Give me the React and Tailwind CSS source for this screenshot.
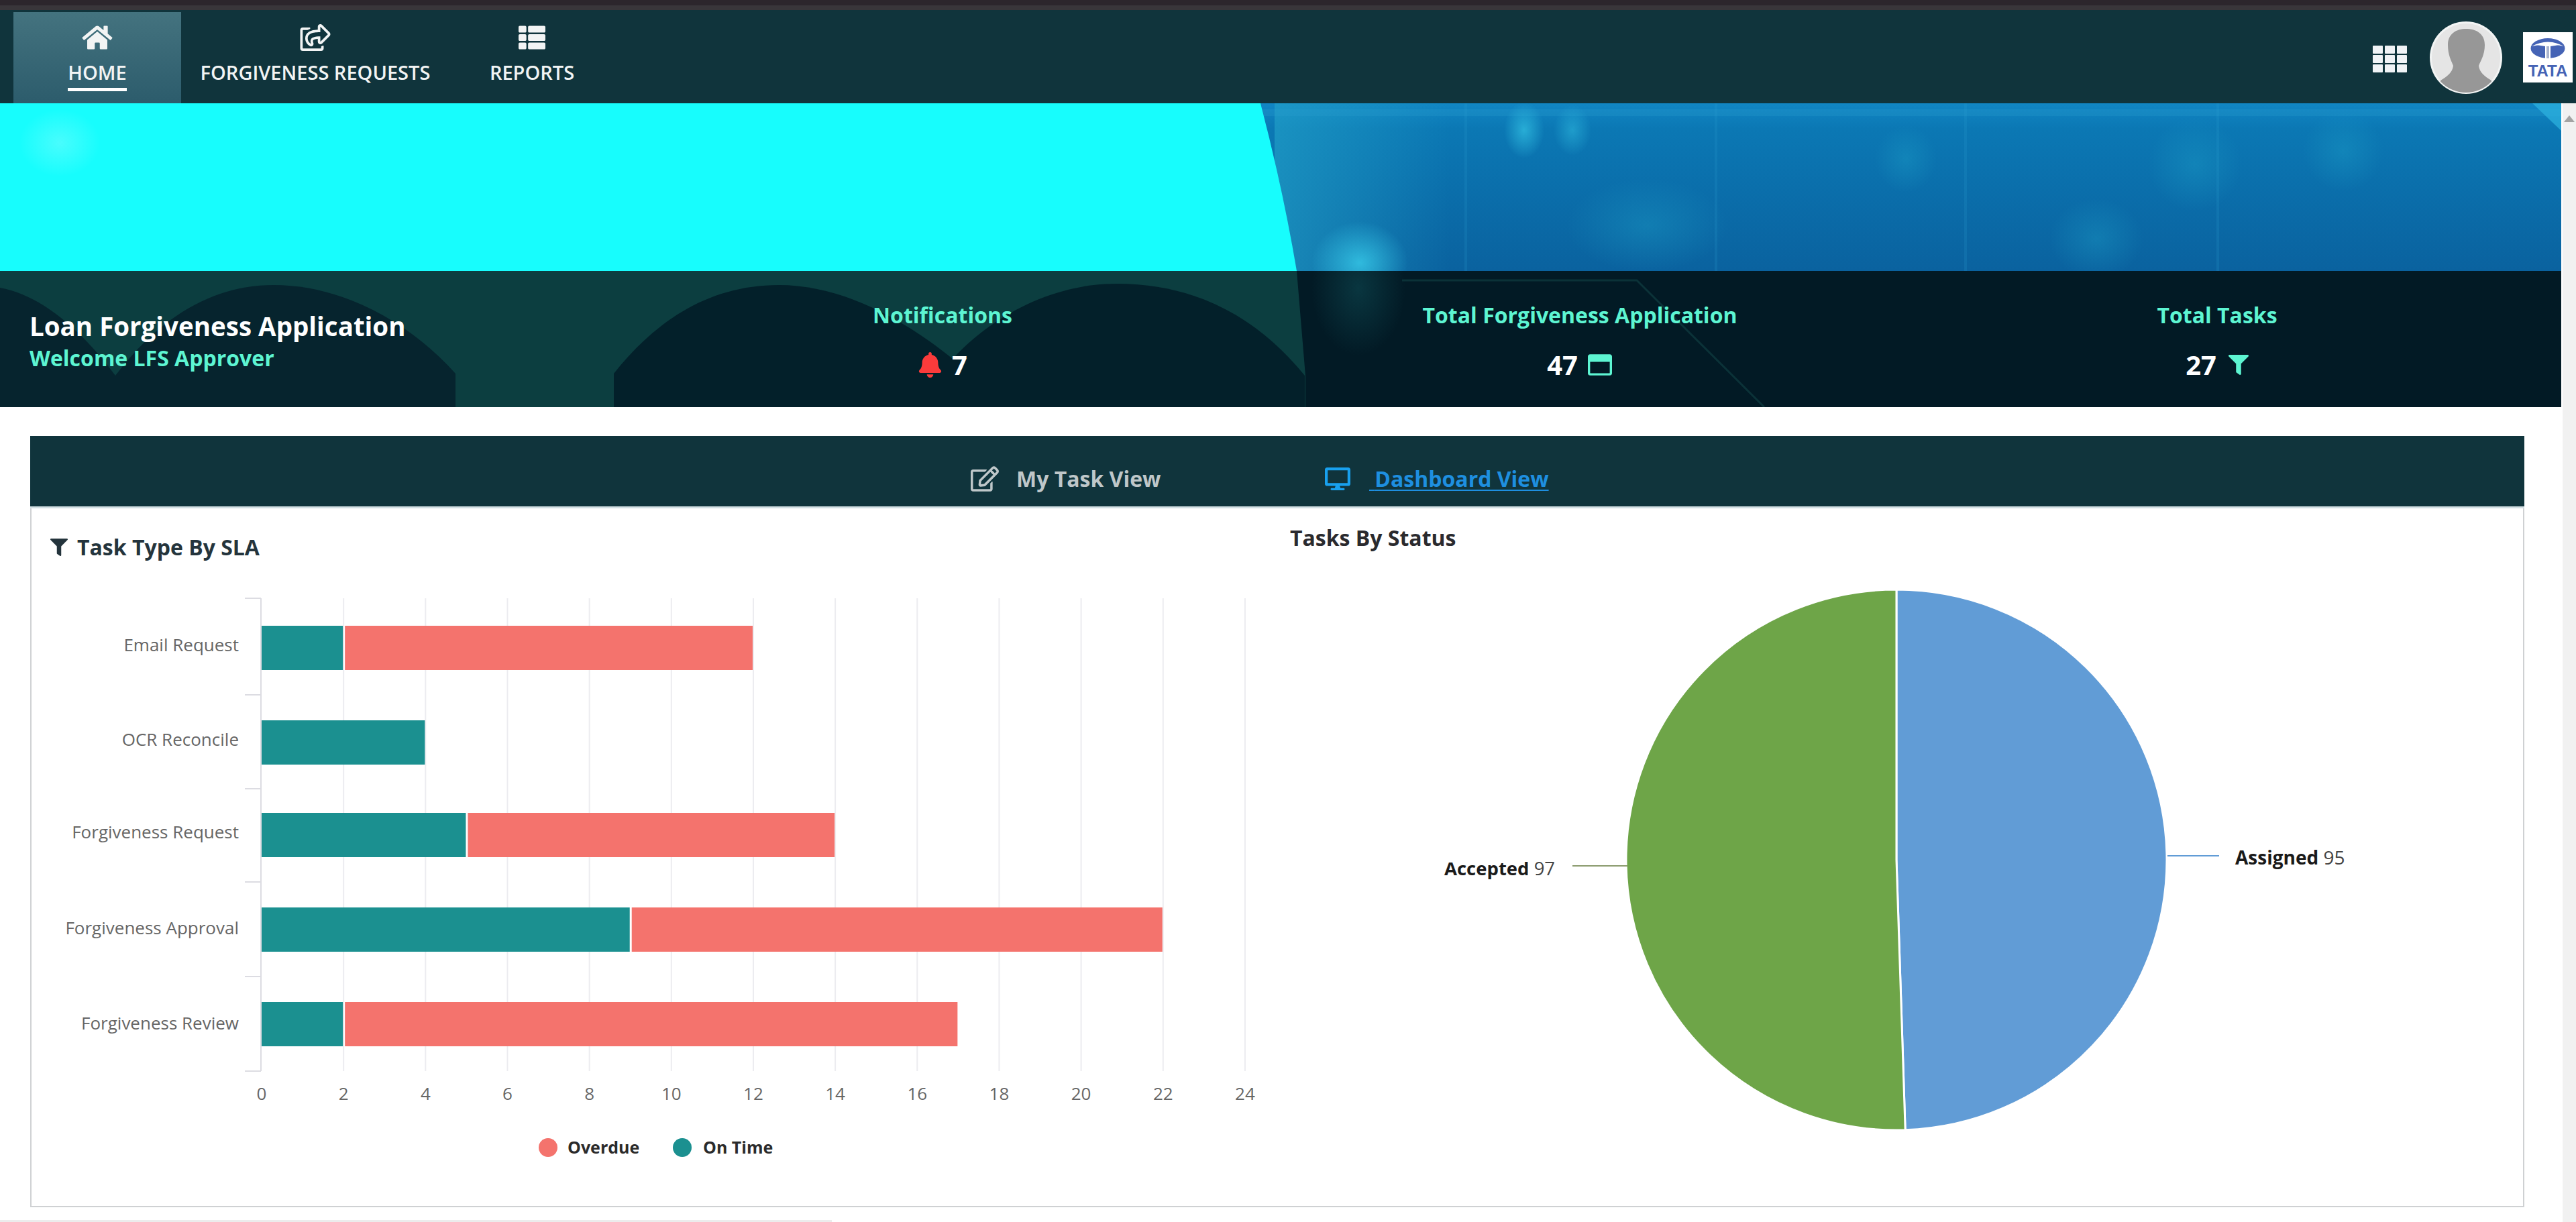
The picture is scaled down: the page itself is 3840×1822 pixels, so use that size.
import React from "react";
import {
  FaHome,
  FaRegShareSquare,
  FaThList,
  FaBell,
  FaRegWindowMaximize,
  FaFilter,
  FaRegEdit,
  FaDesktop,
} from "react-icons/fa";

const nav = [
  { label: "HOME", Icon: FaHome, w: "w-[250px]", active: true },
  { label: "FORGIVENESS REQUESTS", Icon: FaRegShareSquare, w: "w-[400px]" },
  { label: "REPORTS", Icon: FaThList, w: "w-[246px]" },
];

const tasks = [
  { name: "Email Request", onTime: 2, overdue: 10, y: 933, labelY: 971 },
  { name: "OCR Reconcile", onTime: 4, overdue: 0, y: 1074, labelY: 1112 },
  { name: "Forgiveness Request", onTime: 5, overdue: 9, y: 1212, labelY: 1250 },
  { name: "Forgiveness Approval", onTime: 9, overdue: 13, y: 1353, labelY: 1393 },
  { name: "Forgiveness Review", onTime: 2, overdue: 15, y: 1494, labelY: 1535 },
];

const ticks = [0, 2, 4, 6, 8, 10, 12, 14, 16, 18, 20, 22, 24];
const catTicks = [892, 1036, 1176, 1315, 1456, 1597];
const X0 = 390;
const UNIT = 61.08;

function HeroArt() {
  return (
    <svg className="absolute inset-0" width="3818" height="453" viewBox="0 154 3818 453">
      <defs>
        <linearGradient id="blue" x1="0" y1="0" x2="0" y2="1">
          <stop offset="0" stopColor="#1186c4" />
          <stop offset="0.15" stopColor="#0b78b4" />
          <stop offset="1" stopColor="#0a629f" />
        </linearGradient>
        <linearGradient id="edge" x1="0" y1="0" x2="1" y2="0">
          <stop offset="0" stopColor="#23a3c9" stopOpacity="0.6" />
          <stop offset="1" stopColor="#23a3c9" stopOpacity="0" />
        </linearGradient>
        <radialGradient id="glow">
          <stop offset="0" stopColor="#35c6e6" stopOpacity="0.85" />
          <stop offset="1" stopColor="#35c6e6" stopOpacity="0" />
        </radialGradient>
        <radialGradient id="soft">
          <stop offset="0" stopColor="#1ea3c9" stopOpacity="0.35" />
          <stop offset="1" stopColor="#1ea3c9" stopOpacity="0" />
        </radialGradient>
        <radialGradient id="white">
          <stop offset="0" stopColor="#c8fbff" stopOpacity="0.8" />
          <stop offset="1" stopColor="#c8fbff" stopOpacity="0" />
        </radialGradient>
        <radialGradient id="columnGlow">
          <stop offset="0" stopColor="#0f4c55" stopOpacity="0.8" />
          <stop offset="1" stopColor="#0f4c55" stopOpacity="0" />
        </radialGradient>
        <clipPath id="bandClip">
          <rect x="1946" y="404" width="400" height="203" />
        </clipPath>
      </defs>

      <rect x="1800" y="154" width="2018" height="250" fill="url(#blue)" />
      <rect x="1900" y="154" width="260" height="250" fill="url(#edge)" />
      <rect x="1880" y="163" width="1938" height="10" fill="#2a9fd0" opacity="0.25" />
      {[2183, 2556, 2928, 3304].map((x) => (
        <rect key={x} x={x} y="154" width="4" height="250" fill="#2a9fd0" opacity="0.18" />
      ))}
      <ellipse cx="2272" cy="194" rx="30" ry="42" fill="url(#glow)" opacity="0.8" />
      <ellipse cx="2344" cy="194" rx="28" ry="38" fill="url(#glow)" opacity="0.55" />
      <ellipse cx="2027" cy="392" rx="72" ry="62" fill="url(#glow)" />
      <ellipse cx="2455" cy="336" rx="120" ry="70" fill="url(#soft)" />
      <ellipse cx="2841" cy="237" rx="46" ry="50" fill="url(#soft)" />
      <ellipse cx="3125" cy="356" rx="70" ry="60" fill="url(#soft)" />
      <ellipse cx="3272" cy="245" rx="70" ry="70" fill="url(#soft)" />
      <ellipse cx="3493" cy="225" rx="60" ry="60" fill="url(#soft)" />
      <path d="M3775 154 H3818 V195 Z" fill="#2eb4e0" opacity="0.7" />

      <path d="M0 154 H1879 Q1912 280 1933 404 H0 Z" fill="#17fdfd" />
      <ellipse cx="89" cy="213" rx="60" ry="50" fill="url(#white)" opacity="0.35" />

      <rect x="0" y="404" width="3818" height="203" fill="#021a25" />
      <path d="M0 404 H1933 L1946 560 V607 H0 Z" fill="#0c3e40" />
      <path d="M0 429 C60 440 120 490 172 560 V607 H0 Z" fill="#06242e" />
      <path d="M172 560 C240 470 320 425 408 425 C510 425 610 480 679 557 V607 H172 Z" fill="#06242e" />
      <path d="M915 557 C980 475 1060 425 1161 425 C1250 425 1340 470 1420 535 V607 H915 Z" fill="#03202a" />
      <path d="M1420 535 C1480 470 1570 423 1665 423 C1790 423 1880 480 1945 560 V607 H1420 Z" fill="#03202a" />
      <ellipse cx="2025" cy="430" rx="70" ry="100" fill="url(#columnGlow)" opacity="0.7" clipPath="url(#bandClip)" />
      <path d="M2090 418 H2440 L2630 607" fill="none" stroke="#0b3238" strokeWidth="3" />
    </svg>
  );
}

function Avatar() {
  return (
    <svg width="108" height="108" viewBox="0 0 108 108">
      <defs>
        <clipPath id="avatarClip">
          <circle cx="54" cy="54" r="52" />
        </clipPath>
      </defs>
      <circle cx="54" cy="54" r="54" fill="#f2f4f4" />
      <circle cx="54" cy="54" r="51" fill="#e5e5e5" />
      <path
        clipPath="url(#avatarClip)"
        d="M27 35 C27 18 40 11 54 11 C69 11 82 18 82 35 C82 50 76 58 73 66 C74 76 82 82 92 88 L92 108 L16 108 L16 88 C26 82 34 76 35 66 C32 58 27 50 27 35 Z"
        fill="#979797"
      />
    </svg>
  );
}

function TataLogo() {
  return (
    <svg width="74" height="75" viewBox="0 0 74 75" className="bg-white">
      <ellipse cx="37" cy="24" rx="25.5" ry="15" fill="#4563b5" />
      <path d="M13 21 Q37 8 61 21 Q37 15 13 21 Z" fill="#ffffff" />
      <path d="M20 19 Q37 14 54 19 L41 21 V39 H33 V21 Z" fill="#ffffff" />
      <rect x="35" y="21" width="4" height="18" fill="#a9b4cf" />
      <text x="37" y="66" textAnchor="middle" fontSize="24" fontWeight="700" fill="#4563b5" fontFamily="'Liberation Sans', sans-serif">
        TATA
      </text>
    </svg>
  );
}

function BarChart() {
  return (
    <svg width="1876" height="900" viewBox="47 860 1876 900" className="block">
      {ticks.slice(1).map((t) => (
        <line key={t} x1={X0 + t * UNIT} x2={X0 + t * UNIT} y1="892" y2="1597" stroke="#ececf0" strokeWidth="2" />
      ))}
      <line x1="389" x2="389" y1="892" y2="1597" stroke="#dcdce2" strokeWidth="2" />
      {catTicks.map((y) => (
        <line key={y} x1="365" x2="389" y1={y} y2={y} stroke="#dcdce2" strokeWidth="2" />
      ))}
      {tasks.map((t) => (
        <g key={t.name}>
          <text x="356" y={t.labelY} textAnchor="end" fontSize="26" fill="#666666">
            {t.name}
          </text>
          <rect x={X0} y={t.y} width={t.onTime * UNIT - 1} height="66" fill="#1b9090" />
          {t.overdue > 0 && (
            <rect x={X0 + t.onTime * UNIT + 2} y={t.y} width={t.overdue * UNIT - 3} height="66" fill="#f4736d" />
          )}
        </g>
      ))}
      {ticks.map((t) => (
        <text key={t} x={X0 + t * UNIT} y="1640" textAnchor="middle" fontSize="26" fill="#666666">
          {t}
        </text>
      ))}
      <circle cx="817" cy="1711" r="14" fill="#f4736d" />
      <text x="846" y="1720" fontSize="25" fontWeight="700" fill="#2b2b2b">
        Overdue
      </text>
      <circle cx="1017" cy="1711" r="14" fill="#1b9090" />
      <text x="1048" y="1720" fontSize="25" fontWeight="700" fill="#2b2b2b">
        On Time
      </text>
    </svg>
  );
}

function PieChart() {
  const cx = 2827;
  const cy = 1282;
  const r = 403;
  const a = (95 / 192) * 2 * Math.PI;
  const ex = cx + r * Math.sin(a);
  const ey = cy - r * Math.cos(a);
  return (
    <svg width="1837" height="900" viewBox="1923 860 1837 900" className="block">
      <path d={`M${cx} ${cy} L${cx} ${cy - r} A${r} ${r} 0 0 1 ${ex} ${ey} Z`} fill="#619cd6" stroke="#ffffff" strokeWidth="3" />
      <path d={`M${cx} ${cy} L${ex} ${ey} A${r} ${r} 0 1 1 ${cx} ${cy - r} Z`} fill="#6ea548" stroke="#ffffff" strokeWidth="3" />
      <line x1="3231" x2="3308" y1="1276" y2="1276" stroke="#619cd6" strokeWidth="2" />
      <text x="3332" y="1289" fontSize="28" fill="#1a1a1a">
        <tspan fontWeight="700">Assigned</tspan>
        <tspan fill="#444444"> 95</tspan>
      </text>
      <line x1="2344" x2="2426" y1="1291" y2="1291" stroke="#8b9b6e" strokeWidth="2" />
      <text x="2153" y="1305" fontSize="27.5" fill="#1a1a1a">
        <tspan fontWeight="700">Accepted</tspan>
        <tspan fill="#444444"> 97</tspan>
      </text>
    </svg>
  );
}

function Stat({ title, value, before, after }) {
  return (
    <div className="w-[950px] flex flex-col items-center pt-[46px]">
      <div className="text-[32px] leading-[40px] font-bold text-[#5df5d2]">{title}</div>
      <div className="mt-[32px] flex items-center gap-[14px] text-[40px] leading-[44px] font-bold text-white">
        {before}
        <span>{value}</span>
        {after}
      </div>
    </div>
  );
}

export default function App() {
  return (
    <div className="relative w-[3840px] h-[1822px] overflow-hidden bg-white font-['Open_Sans',sans-serif]">
      <div className="h-[15px] bg-[#39363a] border-t-[8px] border-[#2c262c]" />

      {/* top bar */}
      <header className="h-[139px] bg-[#10343c] flex items-stretch justify-between pt-[3px] pl-[20px]">
        <nav className="flex">
          {nav.map(({ label, Icon, w, active }) => (
            <div
              key={label}
              className={`${w} flex flex-col items-center pt-[18px] text-white ${active ? "bg-gradient-to-b from-[#44737f] to-[#2c5c6c]" : ""}`}
            >
              <Icon className="w-[46px] h-[40px] text-[#f2f4f4]" />
              <div className="mt-[14px] text-[29px] leading-[36px] font-semibold text-[#f2f4f4]">{label}</div>
              {active && <div className="mt-[5px] w-[88px] h-[5px] bg-white" />}
            </div>
          ))}
        </nav>
        <div className="flex items-start pr-[5px]">
          <div className="mt-[50px] w-[51px] h-[40px] grid grid-cols-3 gap-x-[3px] gap-y-[2px]">
            {Array.from({ length: 9 }).map((_, i) => (
              <div key={i} className="bg-[#f0f3f6] rounded-[1px]" />
            ))}
          </div>
          <div className="ml-[34px] mt-[14px]">
            <Avatar />
          </div>
          <div className="ml-[31px] mt-[30px]">
            <TataLogo />
          </div>
        </div>
      </header>

      <div className="flex">
        <main className="w-[3818px]">
          {/* banner */}
          <section className="relative h-[453px] border-b-2 border-[#6b7276]">
            <HeroArt />
            <div className="relative h-[250px]" />
            <div className="relative flex h-[203px]">
              <div className="w-[930px] pl-[44px] pt-[60px]">
                <div className="text-[38.5px] leading-[44px] font-bold text-white">Loan Forgiveness Application</div>
                <div className="mt-[6px] text-[32px] leading-[40px] font-bold text-[#5df5d2]">Welcome LFS Approver</div>
              </div>
              <Stat title="Notifications" value="7" before={<FaBell className="w-[37px] h-[38px] text-[#fb3b3b]" />} />
              <Stat title="Total Forgiveness Application" value="47" after={<FaRegWindowMaximize className="w-[38px] h-[36px] text-[#5df5d2]" />} />
              <Stat title="Total Tasks" value="27" after={<FaFilter className="ml-[4px] w-[30px] h-[30px] text-[#5df5d2]" />} />
            </div>
          </section>

          {/* task card */}
          <section className="mt-[43px] ml-[45px] w-[3718px] h-[1150px] border-x-2 border-b-2 border-[#cfd1d3]">
            <div className="h-[108px] -mx-[2px] bg-[#10343c] border-b-[3px] border-[#d4e0e4] flex items-center pl-[1402px] pt-[22px] text-[32px] font-bold">
              <div className="flex items-center w-[528px] text-[#bfc7c9]">
                <FaRegEdit className="w-[42px] h-[38px]" />
                <span className="ml-[26px]">My Task View</span>
              </div>
              <div className="flex items-center text-[#1e8fe0]">
                <FaDesktop className="w-[38px] h-[36px] text-[#18a0ee]" />
                <span className="ml-[28px] underline underline-offset-4 decoration-2">{"\u00A0"}Dashboard View</span>
              </div>
            </div>
            <div className="flex">
              <div className="w-[1876px]">
                <div className="pt-[41px] pl-[28px] flex items-center gap-[14px] h-[75px] text-[32px] font-bold text-[#24343c]">
                  <FaFilter className="w-[26px] h-[26px]" />
                  <span>Task Type By SLA</span>
                </div>
                <div className="mt-[27px]">
                  <BarChart />
                </div>
              </div>
              <div className="flex-1">
                <div className="pt-[27px] h-[61px] text-[32px] leading-[34px] font-bold text-[#2a2a2e]">Tasks By Status</div>
                <div className="mt-[41px]">
                  <PieChart />
                </div>
              </div>
            </div>
          </section>
        </main>

        <aside className="ml-[2px] w-[20px] h-[1668px] bg-[#f1f1f1] flex justify-center pt-[18px]">
          <div className="w-0 h-0 border-x-[8px] border-x-transparent border-b-[10px] border-b-[#a3a3a3]" />
        </aside>
      </div>

      <div className="absolute left-0 bottom-0 w-[1240px] h-[3px] bg-[#ececec]" />
    </div>
  );
}
